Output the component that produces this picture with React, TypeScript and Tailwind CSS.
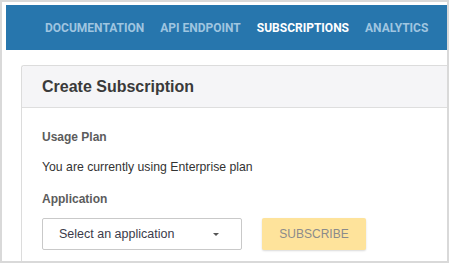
import React from "react";

export default function App() {
  const nav = [
    { label: "DOCUMENTATION", active: false },
    { label: "API ENDPOINT", active: false },
    { label: "SUBSCRIPTIONS", active: true },
    { label: "ANALYTICS", active: false },
  ];
  return (
    <div className="w-[449px] h-[263px] overflow-hidden bg-white border-2 border-[#d9d9d9] pl-[4px] pt-[3px] flex flex-col">
      <div
        className="h-[45px] shrink-0 bg-[#2776ad] flex items-center pl-[39px] gap-[16px]"
        style={{ fontFamily: "Roboto, sans-serif" }}
      >
        {nav.map((n) => (
          <span
            key={n.label}
            className={`text-[12px] font-bold tracking-[0px] ${n.active ? "text-white" : "text-[#9fc5e0]"}`}
          >
            {n.label}
          </span>
        ))}
      </div>
      <div
        className="ml-[15px] mt-[15px] flex-1 border border-r-0 border-b-0 border-[#dcdcdc] rounded-tl-[3px] flex flex-col"
        style={{ fontFamily: "'Liberation Sans', Arial, sans-serif" }}
      >
        <div className="h-[42px] shrink-0 bg-[#f5f5f7] border-b border-[#dedede] flex items-center pl-[20px] rounded-tl-[3px]">
          <span className="text-[16px] font-bold text-[#3a3a3a]">Create Subscription</span>
        </div>
        <div className="pl-[20px] pt-[22px] flex flex-col">
          <div className="text-[12px] leading-[14px] font-bold text-[#5c5c5c]">Usage Plan</div>
          <div className="mt-[16px] text-[12.25px] leading-[14px] text-[#333333]">
            You are currently using Enterprise plan
          </div>
          <div className="mt-[18px] text-[12px] leading-[14px] font-bold text-[#5c5c5c]">Application</div>
          <div className="mt-[12px] flex items-center">
            <div className="w-[200px] h-[32px] border border-[#c9c9c9] rounded-[2px] flex items-center justify-between pl-[16px] pr-[22px]">
              <span className="text-[12.5px] text-[#3b3b4a]">Select an application</span>
              <svg width="6" height="3" viewBox="0 0 6 3">
                <polygon points="0,0 6,0 3,3" fill="#555" />
              </svg>
            </div>
            <div className="ml-[20px] w-[104px] h-[32px] bg-[#fee39b] rounded-[2px] shadow-[0_1px_2px_rgba(0,0,0,0.15)] flex items-center justify-center">
              <span className="text-[12px] text-[#8b8b8b]">SUBSCRIBE</span>
            </div>
          </div>
        </div>
      </div>
    </div>
  );
}
